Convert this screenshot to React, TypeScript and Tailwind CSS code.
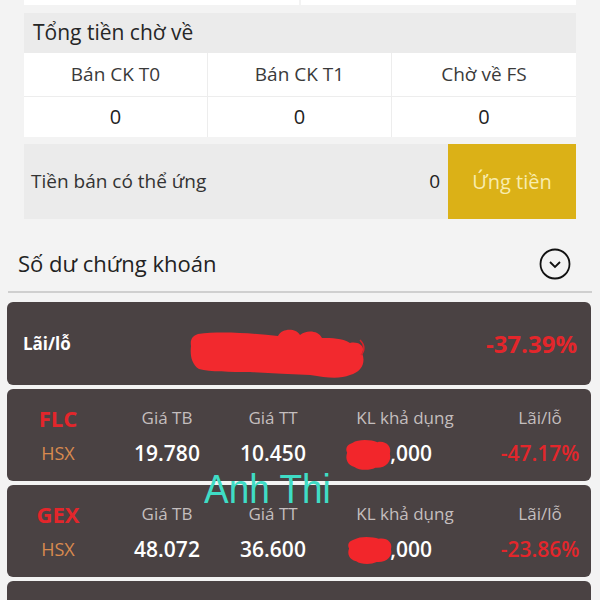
import React from 'react';

const font = { fontFamily: '"Open Sans", "Noto Sans", sans-serif' };

function Blob({ className }: { className?: string }) {
  // red marker scribble covering a value
  return (
    <svg viewBox="0 0 46 40" preserveAspectRatio="none" className={className}>
      <path
        d="M8 6 C14 1 26 2 32 5 C40 3 46 10 44 19 C46 28 40 37 30 36 C24 40 14 39 10 35 C3 33 1 25 3 18 C1 12 3 8 8 6 Z"
        fill="#f2262b"
      />
    </svg>
  );
}

function BigBlob() {
  return (
    <svg viewBox="0 0 176 52" preserveAspectRatio="none" className="mt-[20px] h-[52px] w-[176px]">
      <path
        d="M8 6 C30 3 60 5 88 8 C92 0 106 0 110 7 C116 2 128 2 132 10 C142 10 152 10 160 15 C168 13 176 18 172 25 C176 34 172 44 160 47 C150 51 138 50 120 47 C100 46 80 45 60 44 C40 44 20 44 9 41 C1 36 0 26 1 18 C0 12 2 8 8 6 Z"
        fill="#f2292e"
      />
      <path d="M170 12 C175 17 175 23 171 27" stroke="#d8242a" strokeWidth="1.5" fill="none" />
    </svg>
  );
}

function StockCard({
  code,
  tb,
  tt,
  kl,
  pl,
  blobClass,
}: {
  code: string;
  tb: string;
  tt: string;
  kl: string;
  pl: string;
  blobClass: string;
}) {
  return (
    <div className="grid h-[92px] grid-cols-[102px_116px_96px_168px_1fr] content-center gap-y-[9px] rounded-[6px] bg-[#4a4243] text-center">
      <div className="text-[22px] font-bold leading-[26px] text-[#e3262b]">{code}</div>
      <div className="text-[17px] leading-[26px] text-[#c4bebe]">Giá TB</div>
      <div className="text-[17px] leading-[26px] text-[#c4bebe]">Giá TT</div>
      <div className="text-[17px] leading-[26px] text-[#c4bebe]">KL khả dụng</div>
      <div className="text-[17px] leading-[26px] text-[#c4bebe]">Lãi/lỗ</div>
      <div className="text-[18px] leading-[26px] text-[#d98a4f]">HSX</div>
      <div className="text-[21px] font-semibold leading-[26px] text-white">{tb}</div>
      <div className="text-[21px] font-semibold leading-[26px] text-white">{tt}</div>
      <div className="flex justify-end pr-[57px]">
        <span className="relative text-[21px] font-semibold leading-[26px] text-white">
          {kl}
          <Blob className={blobClass} />
        </span>
      </div>
      <div className="text-[21px] font-semibold leading-[26px] text-[#e3262b]">{pl}</div>
    </div>
  );
}

export default function App() {
  return (
    <div className="relative h-[600px] w-[600px] overflow-hidden bg-[#f3f3f3]" style={font}>
      {/* Tổng tiền chờ về */}
      <div className="px-[24px]">
        <div className="flex h-[5px] gap-[2px]">
          <div className="flex-1 bg-white" />
          <div className="flex-1 bg-white" />
        </div>
        <div className="mt-[8px] flex h-[40px] items-center bg-[#ebebeb] pl-[9px] text-[21px] text-[#262626]">
          Tổng tiền chờ về
        </div>
        <div className="grid grid-cols-3 bg-white text-[19px] text-[#3a3a3a]">
          {['Bán CK T0', 'Bán CK T1', 'Chờ về FS'].map((t, i) => (
            <div
              key={t}
              className={`flex h-[44px] items-center justify-center border-b border-[#ededed] ${i < 2 ? 'border-r' : ''}`}
            >
              {t}
            </div>
          ))}
          {[0, 1, 2].map((i) => (
            <div
              key={i}
              className={`flex h-[40px] items-center justify-center border-[#ededed] text-[20px] text-[#222] ${i < 2 ? 'border-r' : ''}`}
            >
              0
            </div>
          ))}
        </div>
        <div className="mt-[7px] flex h-[75px] items-center bg-[#ebebeb]">
          <div className="flex-1 pl-[7px] text-[19px] text-[#333]">Tiền bán có thể ứng</div>
          <div className="pr-[8px] text-[19px] text-[#222]">0</div>
          <button className="flex h-full w-[128px] items-center justify-center bg-[#dbb117] text-[20px] text-[#f8ecae]">
            Ứng tiền
          </button>
        </div>
      </div>

      {/* Số dư chứng khoán */}
      <div className="mx-[8px] mt-[7px] flex h-[67px] items-center justify-between border-b-2 border-[#cfcfcf] pl-[10px] pr-[21px] pt-[10px]">
        <span className="text-[22px] text-[#222]">Số dư chứng khoán</span>
        <svg viewBox="0 0 32 32" className="h-[32px] w-[32px]">
          <circle cx="16" cy="16" r="14.5" fill="none" stroke="#111" strokeWidth="1.8" />
          <path d="M11 14 L16 19 L21 14" fill="none" stroke="#111" strokeWidth="1.8" />
        </svg>
      </div>

      <div className="ml-[7px] mr-[9px] mt-[9px] flex flex-col gap-[4px]">
        <div className="flex h-[83px] items-center rounded-[6px] bg-[#4a4243] pl-[16px] pr-[14px]">
          <span className="w-[167px] text-[17px] font-bold text-white">Lãi/lỗ</span>
          <BigBlob />
          <span className="ml-auto text-[24px] font-bold text-[#e3262b]">-37.39%</span>
        </div>
        <StockCard
          code="FLC"
          tb="19.780"
          tt="10.450"
          kl=",000"
          pl="-47.17%"
          blobClass="absolute right-full top-[-2px] mr-[-2px] h-[33px] w-[48px]"
        />
        <StockCard
          code="GEX"
          tb="48.072"
          tt="36.600"
          kl=",000"
          pl="-23.86%"
          blobClass="absolute right-full top-[-1px] mr-[-3px] h-[30px] w-[47px]"
        />
        <div className="h-[60px] rounded-[6px] bg-[#4a4243]" />
      </div>

      {/* watermark */}
      <div
        className="absolute left-[204px] top-[470px] scale-y-110 text-[37px] leading-[40px] text-[#3fdcc5]"
        style={{ fontFamily: '"Liberation Sans", Arial, sans-serif' }}
      >
        Anh Thi
      </div>
    </div>
  );
}
